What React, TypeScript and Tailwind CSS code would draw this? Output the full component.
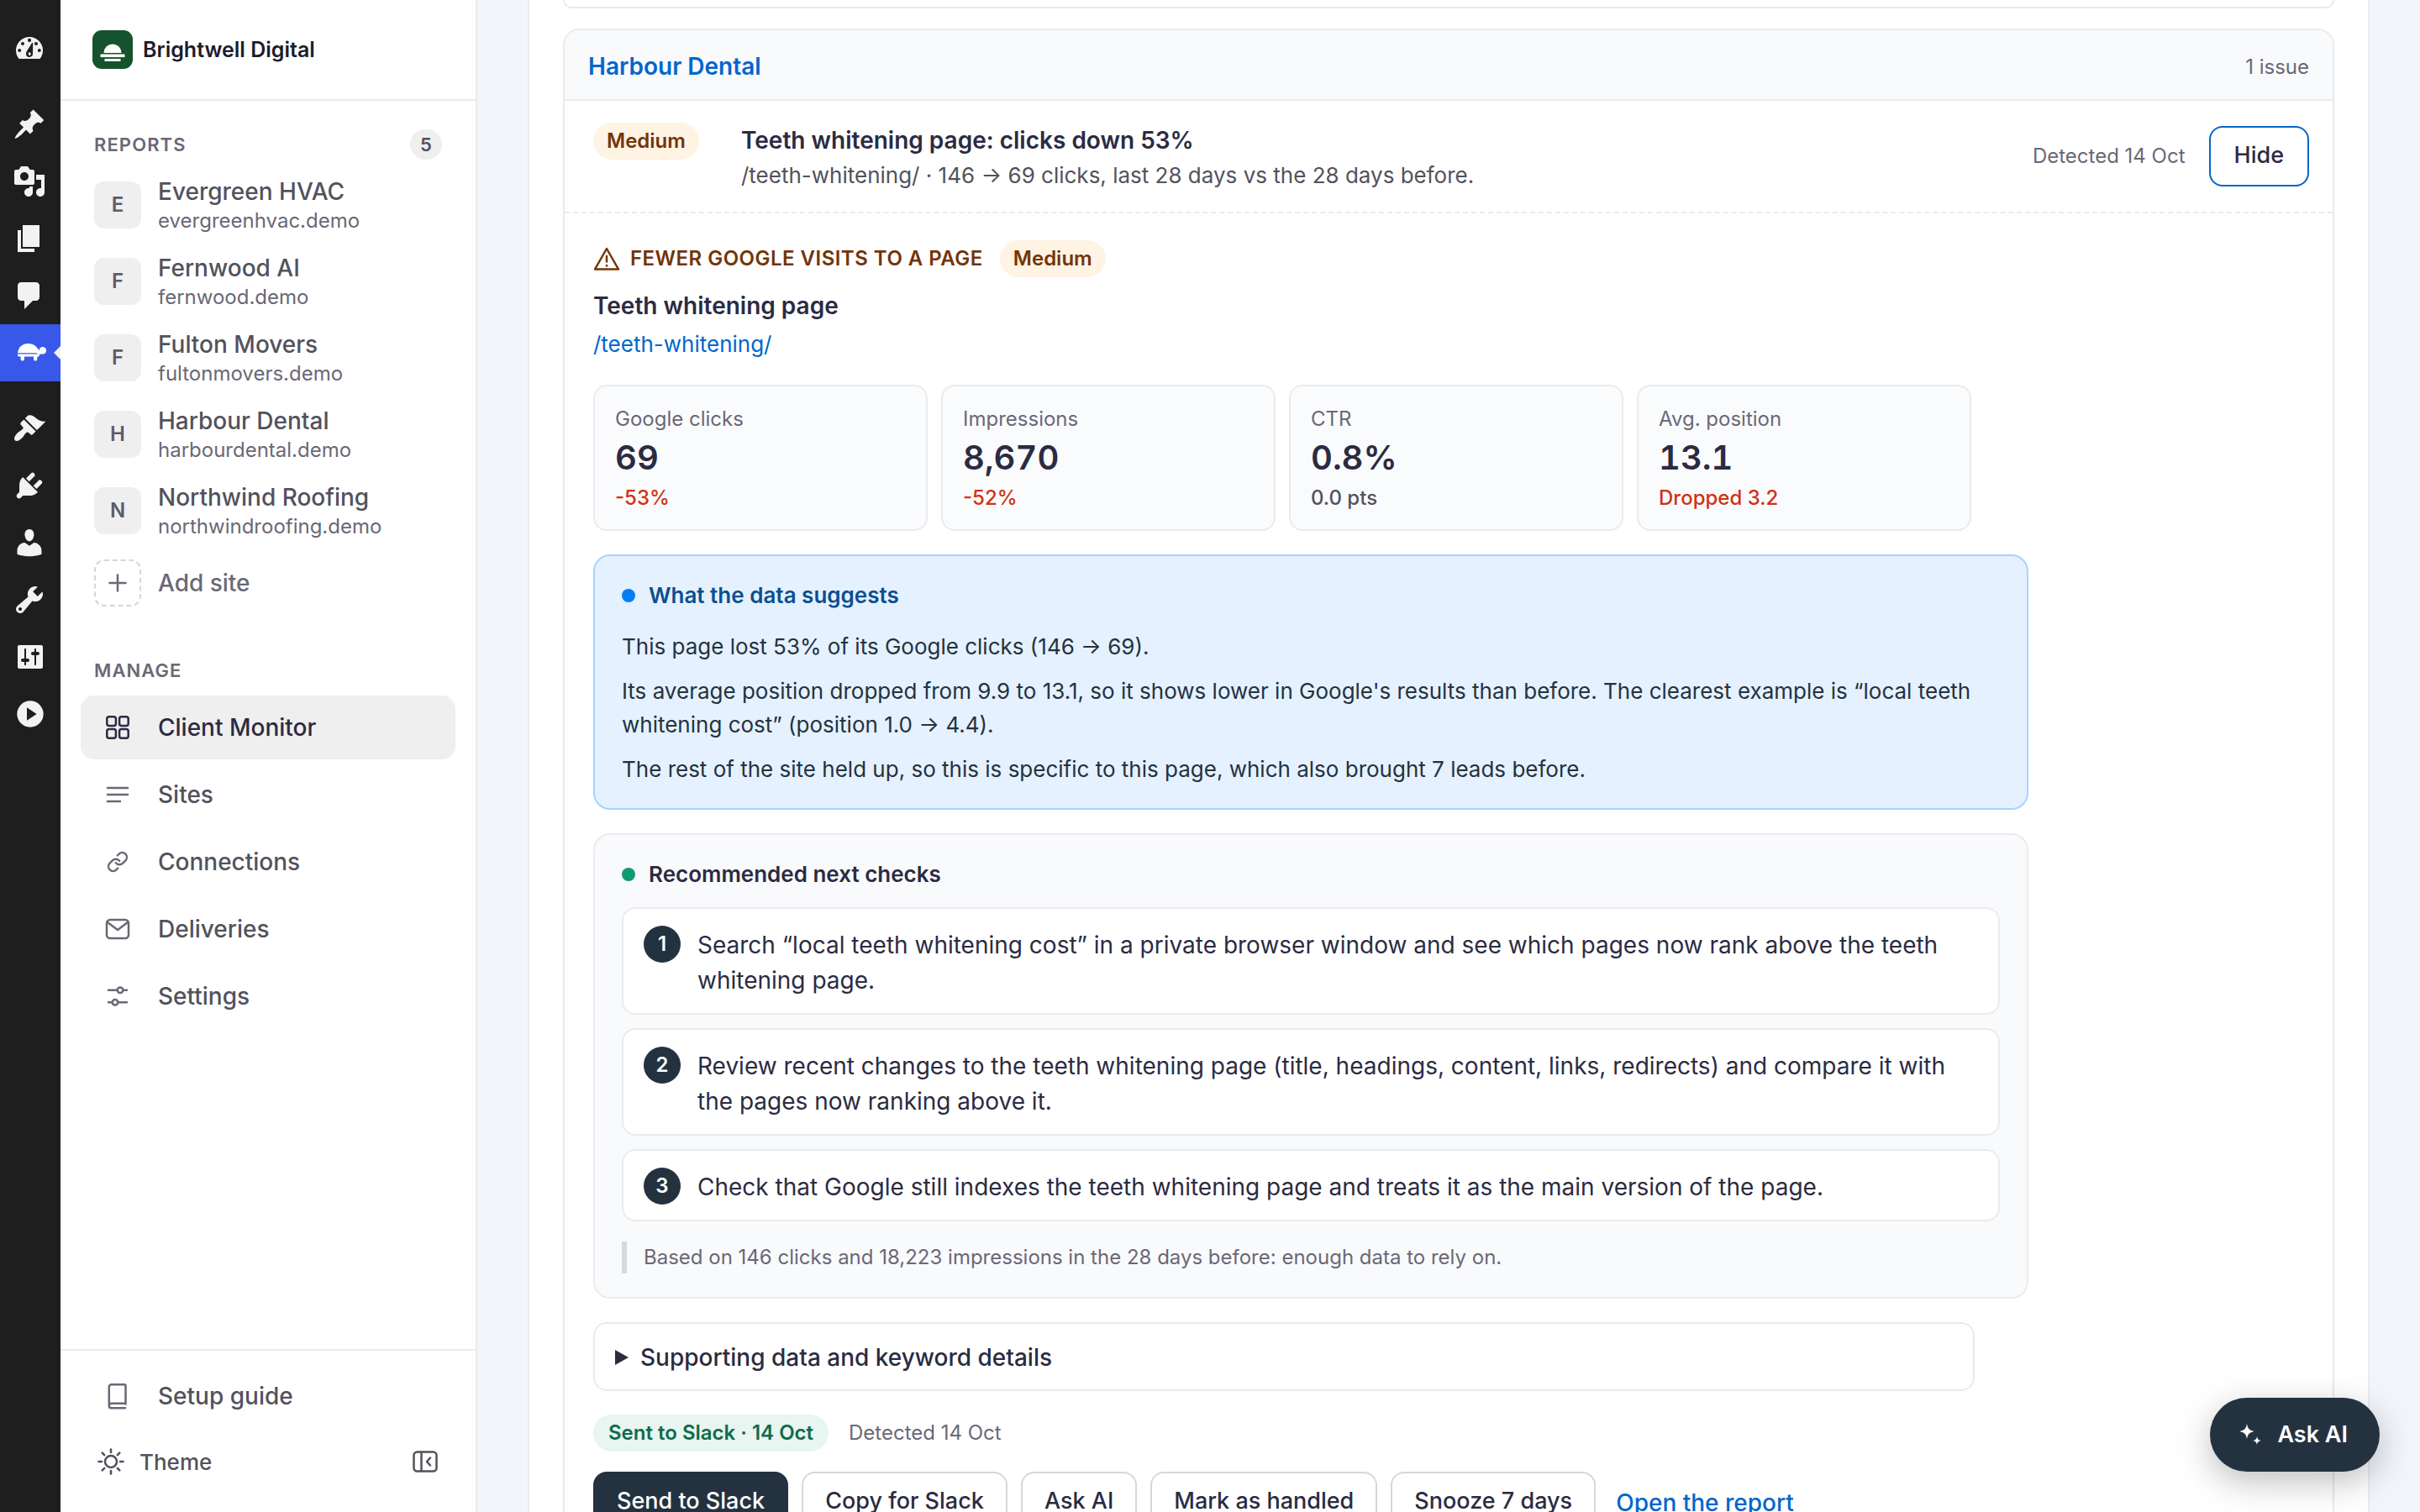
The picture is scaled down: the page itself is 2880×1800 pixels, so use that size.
import type { ReactNode } from 'react';

const railPaths = {
  post: 'M10.44 3.02l1.82-1.82 6.36 6.35-1.83 1.82c-1.05-.68-2.48-.57-3.41.36l-.75.75c-.92.93-1.04 2.35-.35 3.41l-1.83 1.82-2.41-2.41-2.8 2.79c-.42.42-3.38 2.71-3.8 2.29s1.86-3.39 2.28-3.81l2.79-2.79L4.1 9.36l1.83-1.82c1.05.69 2.48.57 3.4-.36l.75-.75c.93-.92 1.05-2.35.36-3.41z',
  media: 'M13 11V4c0-.55-.45-1-1-1h-1.67L9 1H5L3.67 3H2c-.55 0-1 .45-1 1v7c0 .55.45 1 1 1h10c.55 0 1-.45 1-1zM7 4.5c1.38 0 2.5 1.12 2.5 2.5S8.38 9.5 7 9.5 4.5 8.38 4.5 7 5.62 4.5 7 4.5zM14 6h5v10.5c0 1.38-1.12 2.5-2.5 2.5S14 17.88 14 16.5s1.12-2.5 2.5-2.5c.17 0 .34.02.5.05V9h-3V6zm-4 8.05V13h2v3.5c0 1.38-1.12 2.5-2.5 2.5S7 17.88 7 16.5 8.12 14 9.5 14c.17 0 .34.02.5.05z',
  page: 'M6 15V2h10v13H6zm-1 1h8v2H3V5h2v11z',
  comments: 'M5 2h9c1.1 0 2 .9 2 2v7c0 1.1-.9 2-2 2h-2l-5 5v-5H5c-1.1 0-2-.9-2-2V4c0-1.1.9-2 2-2z',
  appearance: 'M14.48 11.06L7.41 3.99l1.5-1.5c.5-.56 2.3-.47 3.51.32 1.21.8 1.43 1.28 2.91 2.1 1.18.64 2.45 1.26 4.45.85zm-.71.71L6.7 4.7 4.93 6.47c-.39.39-.39 1.02 0 1.41l1.06 1.06c.39.39.39 1.03 0 1.42-.6.6-1.43 1.11-2.21 1.69-.35.26-.7.53-1.01.84C1.43 14.23.4 16.08 1.4 17.07c.99 1 2.84-.03 4.18-1.36.31-.31.58-.66.85-1.02.57-.78 1.08-1.61 1.69-2.21.39-.39 1.02-.39 1.41 0l1.06 1.06c.39.39 1.02.39 1.41 0z',
  plugins: 'M13.11 4.36L9.87 7.6 8 5.73l3.24-3.24c.35-.34 1.05-.2 1.56.32.52.51.66 1.21.31 1.55zm-8 1.77l.91-1.12 9.01 9.01-1.19.84c-.71.71-2.63 1.16-3.82 1.16H6.14L4.9 17.26c-.59.59-1.54.59-2.12 0-.59-.58-.59-1.53 0-2.12l1.24-1.24v-3.88c0-1.13.4-3.19 1.09-3.89zm7.26 3.97l3.24-3.24c.34-.35 1.04-.21 1.55.31.52.51.66 1.21.31 1.55l-3.24 3.25z',
  users: 'M10 9.25c-2.27 0-2.73-3.44-2.73-3.44C7 4.02 7.82 2 9.97 2c2.16 0 2.98 2.02 2.71 3.81 0 0-.41 3.44-2.68 3.44zm0 2.57L12.72 10c2.39 0 4.52 2.33 4.52 4.53v2.49s-3.65 1.13-7.24 1.13c-3.65 0-7.24-1.13-7.24-1.13v-2.49c0-2.25 1.94-4.48 4.47-4.48z',
  tools: 'M16.68 9.77c-1.34 1.34-3.3 1.67-4.95.99l-5.41 6.52c-.99.99-2.59.99-3.58 0s-.99-2.59 0-3.57l6.52-5.42c-.68-1.65-.35-3.61.99-4.95 1.28-1.28 3.12-1.62 4.72-1.06l-2.89 2.89 2.82 2.82 2.86-2.87c.53 1.58.18 3.39-1.08 4.65zM3.81 16.21c.4.39 1.04.39 1.43 0 .4-.4.4-1.04 0-1.43-.39-.4-1.03-.4-1.43 0-.39.39-.39 1.03 0 1.43z',
  settings: 'M18 16V4c0-.55-.45-1-1-1H4c-.55 0-1 .45-1 1v12c0 .55.45 1 1 1h13c.55 0 1-.45 1-1zM8 11h1c.55 0 1 .45 1 1s-.45 1-1 1H8v1.5c0 .28-.22.5-.5.5s-.5-.22-.5-.5V13H6c-.55 0-1-.45-1-1s.45-1 1-1h1V5.5c0-.28.22-.5.5-.5s.5.22.5.5V11zm5-2h-1c-.55 0-1-.45-1-1s.45-1 1-1h1V5.500c0-.28.22-.5.5-.5s.5.22.5.5V7h1c.55 0 1 .45 1 1s-.45 1-1 1h-1v5.500c0 .28-.22.5-.5.5s-.5-.22-.5-.5V9z',
  play: 'M10.500 2.160a7.840 7.840 0 1 0 0 15.680 7.840 7.840 0 0 0 0-15.680zM8.500 6.120l5.820 3.850L8.500 13.880z',
  dashboard:
    'M3.76 16h12.48A7.98 7.98 0 0 0 18 11a8 8 0 1 0-16 0c0 1.89.66 3.63 1.76 5zM10 3.9a1.05 1.05 0 1 1 0 2.1 1.05 1.05 0 0 1 0-2.1zM6 6a1 1 0 1 1 0 2 1 1 0 0 1 0-2zM14 6a1 1 0 1 1 0 2 1 1 0 0 1 0-2zM4.1 10a1 1 0 1 1 0 2 1 1 0 0 1 0-2zM15.9 10a1 1 0 1 1 0 2 1 1 0 0 1 0-2zM11.9 6.4c.3 0 .2.5.2.9l-.1 5.6a2 2 0 0 1-4 .1c0-.9.4-1.4.8-2.1l2.6-4.2c.2-.2.3-.3.5-.3zM10.1 12.1a.75.95 0 1 0 0 1.9.75.95 0 0 0 0-1.9z',
};

function RailItem({ label, path }: { label: string; path: string }) {
  return (
    <a href="#" aria-label={label} className="flex h-[68px] items-center pl-[15px]">
      <svg viewBox="0 0 20 20" className="size-10" fill="#f3f1f1" fillRule="evenodd">
        <path d={path} />
      </svg>
    </a>
  );
}

function AdminRail() {
  return (
    <nav aria-label="Admin" className="flex w-[72px] shrink-0 flex-col bg-[#1e1e1e] pt-6">
      <RailItem label="Dashboard" path={railPaths.dashboard} />
      <div className="h-[22px] shrink-0" />
      <RailItem label="Posts" path={railPaths.post} />
      <RailItem label="Media" path={railPaths.media} />
      <RailItem label="Pages" path={railPaths.page} />
      <RailItem label="Comments" path={railPaths.comments} />
      <a href="#" aria-label="Client reports" className="flex h-[68px] items-center justify-between bg-[#3858e9] pl-[15px]">
        <svg viewBox="0 0 40 40" className="size-10" fill="#fff">
          <path d="M6 20.200C6.800 13.300 11.800 9 18.300 9c5.600 0 9.800 2.600 12.400 7.200l1.400 2.600v1.400z" />
          <circle cx="35.800" cy="17.200" r="4.300" />
          <path d="M28 17l8 1v3.100c-1.300.7-3 .7-4.800.7l-3.200-1.600z" />
          <path d="M6 21.600h26v.9c0 1.400-.9 2-2.200 2h-.4v2.900a2.200 2.200 0 0 1-4.400 0v-2.900H14v2.900a2.200 2.200 0 0 1-4.400 0v-2.900H8.200c-1.400 0-2.200-.6-2.200-2z" />
        </svg>
        <svg viewBox="0 0 8 16" className="h-4 w-2" fill="#f0f0f1">
          <path d="M8 0v16L0 8z" />
        </svg>
      </a>
      <div className="h-[22px] shrink-0" />
      <RailItem label="Appearance" path={railPaths.appearance} />
      <RailItem label="Plugins" path={railPaths.plugins} />
      <RailItem label="Users" path={railPaths.users} />
      <RailItem label="Tools" path={railPaths.tools} />
      <RailItem label="Settings" path={railPaths.settings} />
      <RailItem label="Expand menu" path={railPaths.play} />
    </nav>
  );
}

const sites = [
  { name: 'Evergreen HVAC', domain: 'evergreenhvac.demo' },
  { name: 'Fernwood AI', domain: 'fernwood.demo' },
  { name: 'Fulton Movers', domain: 'fultonmovers.demo' },
  { name: 'Harbour Dental', domain: 'harbourdental.demo' },
  { name: 'Northwind Roofing', domain: 'northwindroofing.demo' },
];

function Glyph({ children }: { children: ReactNode }) {
  return (
    <svg viewBox="0 0 32 32" className="size-8 shrink-0" fill="none" stroke="currentColor" strokeWidth="2.5" strokeLinecap="round" strokeLinejoin="round">
      {children}
    </svg>
  );
}

const manageItems = [
  {
    label: 'Client Monitor',
    active: true,
    icon: (
      <Glyph>
        <rect x="3.300" y="3.300" width="10.600" height="10.600" rx="2.500" />
        <rect x="18.100" y="3.300" width="10.600" height="10.600" rx="2.500" />
        <rect x="3.300" y="18.100" width="10.600" height="10.600" rx="2.500" />
        <rect x="18.100" y="18.100" width="10.600" height="10.600" rx="2.500" />
      </Glyph>
    ),
  },
  { label: 'Sites', active: false, icon: <Glyph><path d="M4 8h24M4 16h24M4 24h15" /></Glyph> },
  {
    label: 'Connections',
    active: false,
    icon: (
      <Glyph>
        <g transform="translate(2.800 2.800) scale(1.100)" strokeWidth="2.200">
          <path d="M10 13a5 5 0 0 0 7.540.54l3-3a5 5 0 0 0-7.070-7.070l-1.720 1.710" />
          <path d="M14 11a5 5 0 0 0-7.540-.54l-3 3a5 5 0 0 0 7.070 7.070l1.710-1.710" />
        </g>
      </Glyph>
    ),
  },
  {
    label: 'Deliveries',
    active: false,
    icon: (
      <Glyph>
        <rect x="3" y="5" width="26" height="22" rx="4" />
        <path d="M4 8l12 9 12-9" />
      </Glyph>
    ),
  },
  {
    label: 'Settings',
    active: false,
    icon: (
      <Glyph>
        <path d="M5 8.700h10.500M22.500 8.700H27M5 23.200h4.500M16.500 23.200H27" />
        <circle cx="19" cy="8.700" r="3.300" />
        <circle cx="13" cy="23.200" r="3.300" />
      </Glyph>
    ),
  },
];

function Sidebar() {
  return (
    <aside className="flex w-[496px] shrink-0 flex-col border-r-2 border-[#ebebed] bg-white text-[#52525c]">
      <div className="flex h-[120px] shrink-0 items-center gap-3 border-b-2 border-[#ebebed] pl-[38px]">
        <svg viewBox="0 0 48 46" className="h-[46px] w-12" fill="#fff">
          <rect width="48" height="46" rx="11" fill="#14532d" />
          <path d="M13.500 27a10.500 10.500 0 0 1 21 0z" />
          <rect x="9.500" y="28.500" width="29" height="3.600" />
          <rect x="14.500" y="34" width="19" height="3" />
        </svg>
        <span className="text-[25px] leading-9 font-semibold text-[#1c1c2e]">Brightwell Digital</span>
      </div>

      <div className="flex items-center justify-between pt-[34px] pr-10 pl-10">
        <h2 className="text-[22px] leading-9 font-semibold tracking-wider text-[#6a6876]">REPORTS</h2>
        <span className="flex h-9 w-[38px] items-center justify-center rounded-full bg-[#efeff0] text-[22px] font-semibold">5</span>
      </div>
      <ul className="mt-2 pl-10">
        {sites.map((site) => (
          <li key={site.name}>
            <a href="#" className="flex h-[91px] items-center gap-5">
              <span className="flex size-14 shrink-0 items-center justify-center rounded-xl bg-[#efeff0] text-2xl font-semibold text-[#5d5b69]">
                {site.name[0]}
              </span>
              <span className="flex flex-col pt-[3px]">
                <span className="text-[28px] leading-9 font-medium">{site.name}</span>
                <span className="text-2xl leading-[34px] text-[#6a6876]">{site.domain}</span>
              </span>
            </a>
          </li>
        ))}
      </ul>
      <button type="button" className="flex h-[82px] items-center gap-5 pl-10 text-left">
        <span className="flex size-14 items-center justify-center rounded-xl border-2 border-dashed border-[#d6d6da] text-[#6a6876]">
          <svg viewBox="0 0 24 24" className="size-6" stroke="currentColor" strokeWidth="2.500" strokeLinecap="round">
            <path d="M12 2.500v19M2.500 12h19" />
          </svg>
        </span>
        <span className="text-[28px] leading-9 font-medium text-[#6a6876]">Add site</span>
      </button>

      <h2 className="mt-[45px] pl-10 text-[22px] leading-9 font-semibold tracking-wider text-[#6a6876]">MANAGE</h2>
      <nav aria-label="Manage" className="mt-3 flex flex-1 flex-col gap-1 px-6">
        {manageItems.map((item) => (
          <a
            key={item.label}
            href="#"
            className={
              item.active
                ? 'flex h-[76px] shrink-0 items-center gap-8 rounded-2xl bg-[#efeff0] pl-7 text-[28px] font-medium text-[#2b2b42]'
                : 'flex h-[76px] shrink-0 items-center gap-8 rounded-2xl pl-7 text-[28px] font-medium'
            }
          >
            <span className={item.active ? '' : 'text-[#6a6876]'}>{item.icon}</span>
            {item.label}
          </a>
        ))}
      </nav>

      <div className="border-t-2 border-[#ebebed] px-6 pt-4 pb-5">
        <a href="#" className="flex h-[76px] items-center gap-8 pl-7 text-[28px] font-medium">
          <span className="text-[#6a6876]">
            <Glyph>
              <path d="M25.500 25.500V3.500a1.200 1.200 0 0 0-1.200-1.200H8.500A2.700 2.700 0 0 0 5.800 5v23c0 1.300 1.200 2.300 2.700 2.300h16.500M5.800 27.500c0-1.700 1.200-2.700 2.700-2.700h17" />
            </Glyph>
          </span>
          Setup guide
        </a>
        <div className="flex h-20 items-center justify-between pr-4 pl-[18px]">
          <button type="button" className="flex items-center gap-4 text-[26px] font-medium">
            <svg viewBox="0 0 36 36" className="size-9" fill="none" stroke="currentColor" strokeWidth="2.600" strokeLinecap="round">
              <circle cx="18" cy="18" r="7" />
              <path d="M18 3.500v3.500M18 29v3.500M3.500 18H7M29 18h3.500M7.700 7.700l2.500 2.500M25.800 25.800l2.500 2.500M7.700 28.300l2.500-2.500M25.800 10.200l2.500-2.500" />
            </svg>
            Theme
          </button>
          <button type="button" aria-label="Collapse sidebar" className="flex size-10 items-center justify-center">
            <Glyph>
              <rect x="2.500" y="4.500" width="27" height="23" rx="4" />
              <path d="M11.500 5v22M22 11.500L18 16l4 4.500" />
            </Glyph>
          </button>
        </div>
      </div>
    </aside>
  );
}

function MediumBadge() {
  return (
    <span className="inline-flex h-11 items-center rounded-full bg-[#fff3e3] px-4 text-2xl font-semibold text-[#733408]">Medium</span>
  );
}

const stats = [
  { label: 'Google clicks', value: '69', delta: '-53%', bad: true },
  { label: 'Impressions', value: '8,670', delta: '-52%', bad: true },
  { label: 'CTR', value: '0.8%', delta: '0.0 pts', bad: false },
  { label: 'Avg. position', value: '13.1', delta: 'Dropped 3.2', bad: true },
];

const checks = [
  'Search “local teeth whitening cost” in a private browser window and see which pages now rank above the teeth whitening page.',
  'Review recent changes to the teeth whitening page (title, headings, content, links, redirects) and compare it with the pages now ranking above it.',
  'Check that Google still indexes the teeth whitening page and treats it as the main version of the page.',
];

function IssueDetail() {
  return (
    <div className="pt-8 pr-7 pl-[34px]">
      <div className="flex h-11 items-center text-[#733408]">
        <svg viewBox="0 0 32 32" className="size-8" fill="none" stroke="currentColor" strokeWidth="2.500" strokeLinejoin="round">
          <path d="M16 4L30 28.500H2z" />
          <path d="M16 12v8.500M16 23v2.500" />
        </svg>
        <h3 className="ml-3 text-2xl font-semibold tracking-[0.02em]">FEWER GOOGLE VISITS TO A PAGE</h3>
        <span className="ml-5 flex">
          <MediumBadge />
        </span>
      </div>
      <h4 className="mt-3 text-[28px] leading-[44px] font-semibold">Teeth whitening page</h4>
      <a href="#" className="mt-1 block text-[26px] leading-10 text-[#0066cc]">/teeth-whitening/</a>

      <dl className="mt-7 grid max-w-[1640px] grid-cols-4 gap-4">
        {stats.map((stat) => (
          <div key={stat.label} className="rounded-2xl border-2 border-[#ebebed] bg-[#fafbfd] px-6 pt-[22px] pb-[18px]">
            <dt className="text-2xl leading-[34px] text-[#6a6876]">{stat.label}</dt>
            <dd className="text-[40px] leading-[58px] font-semibold tabular-nums">{stat.value}</dd>
            <dd className={stat.bad ? 'text-2xl leading-[38px] font-medium text-[#d13212]' : 'text-2xl leading-[38px] font-medium text-[#52525c]'}>
              {stat.delta}
            </dd>
          </div>
        ))}
      </dl>

      <section className="mt-7 max-w-[1708px] rounded-[20px] border-2 border-[#a8d4fd] bg-[#e5f1fe] px-8 pt-7 pb-[26px] text-[26px] text-[#243240]">
        <h4 className="flex items-center gap-4 leading-[38px] font-semibold text-[#0b4f91]">
          <span className="size-4 rounded-full bg-[#007ff5]" />
          What the data suggests
        </h4>
        <div className="mt-[22px] flex flex-col gap-[13px] leading-10">
          <p>This page lost 53% of its Google clicks (146 → 69).</p>
          <p>
            Its average position dropped from 9.9 to 13.1, so it shows lower in Google's results than before. The clearest example is “local teeth
            whitening cost” (position 1.0 → 4.4).
          </p>
          <p>The rest of the site held up, so this is specific to this page, which also brought 7 leads before.</p>
        </div>
      </section>

      <section className="mt-7 max-w-[1708px] rounded-[20px] border-2 border-[#ebebed] bg-[#f9fafc] px-8 py-7">
        <h4 className="flex items-center gap-4 text-[26px] leading-[38px] font-semibold">
          <span className="size-4 rounded-full bg-[#149a6e]" />
          Recommended next checks
        </h4>
        <ol className="mt-5 flex flex-col gap-4">
          {checks.map((check, index) => (
            <li key={check} className="flex gap-5 rounded-2xl border-2 border-[#ebebed] bg-white px-6 pt-5 pb-[18px] text-[28px] leading-[42px]">
              <span className="flex size-11 shrink-0 items-center justify-center rounded-full bg-[#243240] text-2xl font-semibold text-white">
                {index + 1}
              </span>
              <p className="pt-0.5">{check}</p>
            </li>
          ))}
        </ol>
        <p className="mt-6 border-l-[6px] border-[#d8d8dc] pl-5 text-2xl leading-[38px] text-[#6a6876]">
          Based on 146 clicks and 18,223 impressions in the 28 days before: enough data to rely on.
        </p>
      </section>

      <details className="mt-7 max-w-[1644px] rounded-2xl border-2 border-[#ebebed]">
        <summary className="flex h-[78px] list-none items-center gap-[14px] pt-0.5 pl-6 text-[28px] font-medium">
          <svg viewBox="0 0 16 20" className="h-5 w-4" fill="currentColor">
            <path d="M0 1l16 9-16 9z" />
          </svg>
          Supporting data and keyword details
        </summary>
      </details>

      <div className="mt-7 flex items-center gap-6 text-2xl">
        <span className="flex h-11 items-center rounded-full bg-[#e8f5f1] px-[18px] font-semibold text-[#116b4b]">Sent to Slack · 14 Oct</span>
        <span className="text-[#6a6876]">Detected 14 Oct</span>
      </div>
      <div className="mt-6 flex items-center gap-4 text-[27px] font-medium">
        <button type="button" className="h-[72px] rounded-2xl border-2 border-[#243240] bg-[#243240] px-[26px] pb-0.5 text-white">Send to Slack</button>
        {['Copy for Slack', 'Ask AI', 'Mark as handled', 'Snooze 7 days'].map((label) => (
          <button key={label} type="button" className="h-[72px] rounded-2xl border-2 border-[#d6d6de] bg-white px-[26px] pb-0.5">
            {label}
          </button>
        ))}
        <a href="#" className="ml-2 pt-0.5 text-[28px] text-[#0066cc]">Open the report</a>
      </div>
    </div>
  );
}

export default function App() {
  return (
    <div className="relative flex h-screen overflow-hidden bg-[#f3f5fb] font-['Inter',sans-serif] text-[#2b2b42] antialiased">
      <AdminRail />
      <Sidebar />
      <main className="min-w-0 flex-1 overflow-hidden px-[60px]">
        <div className="border-x-2 border-[#ebebf0] bg-white px-10">
          <div className="h-[10px] rounded-b-2xl border-2 border-t-0 border-[#ebebed]" />
          <article className="mt-6 overflow-hidden rounded-t-[20px] border-2 border-b-0 border-[#e9eaec]">
            <header className="flex h-[84px] items-center justify-between border-b-2 border-[#e9eaec] bg-[#f9fafc] px-7 pt-[3px]">
              <a href="#" className="text-[28px] font-semibold text-[#0066cc]">Harbour Dental</a>
              <span className="pt-0.5 text-2xl text-[#6a6876]">1 issue</span>
            </header>
            <div className="flex h-[134px] items-center border-b-2 border-dashed border-[#ebebed] pr-7 pl-[34px]">
              <div className="w-44 shrink-0 self-start pt-[26px]">
                <MediumBadge />
              </div>
              <div className="flex-1 pt-[3px]">
                <h3 className="text-[28px] leading-[42px] font-semibold">Teeth whitening page: clicks down 53%</h3>
                <p className="text-[26px] leading-[42px] text-[#52525c]">/teeth-whitening/ · 146 → 69 clicks, last 28 days vs the 28 days before.</p>
              </div>
              <span className="mr-7 text-2xl text-[#6a6876]">Detected 14 Oct</span>
              <button type="button" className="h-[72px] rounded-2xl border-2 border-[#0066cc] px-7 pb-0.5 text-[27px] font-medium">Hide</button>
            </div>
            <IssueDetail />
          </article>
        </div>
      </main>
      <button
        type="button"
        className="absolute right-12 bottom-12 flex h-[88px] items-center gap-3 rounded-full bg-[#243240] pr-[38px] pl-8 text-[27px] font-semibold text-white shadow-[0_12px_40px_rgba(0,0,0,0.25)]"
      >
        <svg viewBox="0 0 36 36" className="size-9" fill="currentColor">
          <path d="M12 5c1.200 6 2.500 7.300 8.500 9-6 1.700-7.300 3-8.500 9-1.200-6-2.500-7.300-8.500-9 6-1.700 7.300-3 8.500-9z" />
          <path d="M24 20c.8 3.600 1.500 4.300 5 5-3.500.8-4.200 1.500-5 5-.8-3.500-1.500-4.200-5-5 3.500-.7 4.200-1.400 5-5z" />
        </svg>
        Ask AI
      </button>
    </div>
  );
}
